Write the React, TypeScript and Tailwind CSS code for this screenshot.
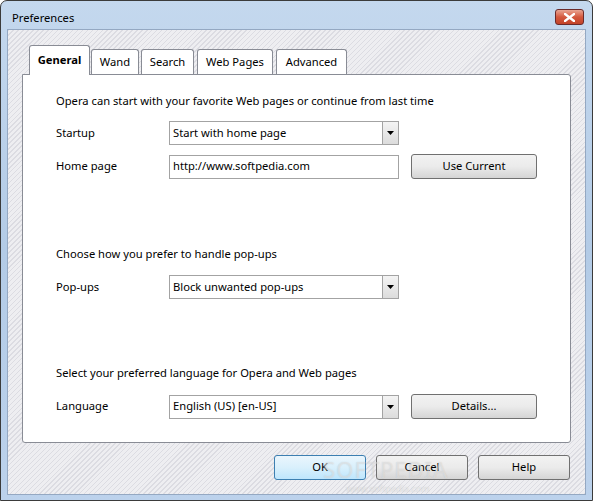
import React from "react";

const hatch =
  "bg-[repeating-linear-gradient(135deg,#dcdce2_0px,#dcdce2_1px,#eeeef1_1px,#eeeef1_3.5px)]";

function Select({ value }: { value: string }) {
  return (
    <div className="flex h-[24px] w-[230px] border border-[#a3a3a3] bg-white">
      <div className="flex flex-1 items-center pl-[3px] text-[11.2px] text-black">{value}</div>
      <div className="flex w-[16px] items-center justify-center border-l border-[#a3a3a3] bg-gradient-to-b from-[#f4f4f4] to-[#dcdcdc]">
        <svg width="7" height="4" viewBox="0 0 7 4">
          <path d="M0 0h7L3.5 4z" fill="#000" />
        </svg>
      </div>
    </div>
  );
}

function Btn({ label, w, def }: { label: string; w: string; def?: boolean }) {
  return (
    <div
      className={
        "flex h-[25px] items-center justify-center rounded-[3px] border text-[11.2px] text-black " +
        w +
        " " +
        (def
          ? "border-[#3c7fb1] bg-gradient-to-b from-[#eaf6fd] via-[#d9f0fc] to-[#bee6fd]"
          : "border-[#707070] bg-gradient-to-b from-[#f2f2f2] via-[#ebebeb] to-[#d5d5d5]")
      }
    >
      {label}
    </div>
  );
}

function Tab({ label, active, cls }: { label: string; active?: boolean; cls: string }) {
  return (
    <div
      className={
        "relative flex items-center justify-center rounded-t-[3px] border border-b-0 border-[#898c95] bg-white text-[11.2px] text-black " +
        cls +
        " " +
        (active ? "z-10 mb-[-1px] h-[30px] font-bold" : "h-[25px]")
      }
    >
      {label}
    </div>
  );
}

function Row({ label, children }: { label: string; children: React.ReactNode }) {
  return (
    <div className="flex items-center">
      <div className="w-[113px] text-[11.2px] text-black">{label}</div>
      {children}
    </div>
  );
}

export default function App() {
  return (
    <div
      className="relative h-[501px] w-[593px] overflow-hidden rounded-t-[7px] border border-[#3b3b3b] bg-gradient-to-b from-[#c4d8ee] via-[#b3cbe6] to-[#bcd2ec]"
      style={{ fontFamily: '"Noto Sans", "DejaVu Sans", sans-serif' }}
    >
      <div className="flex h-[28px] items-center justify-between pl-[11px] pr-[8px]">
        <div className="pt-[6px] text-[11.2px] text-black">Preferences</div>
        <div className="mt-[4px] flex h-[16px] w-[29px] items-center justify-center rounded-[3px] border border-[#6b2a2a] bg-gradient-to-b from-[#e8a493] via-[#d4583e] to-[#c24329]">
          <svg width="11" height="9" viewBox="0 0 11 9">
            <path d="M1 1l9 7M10 1l-9 7" stroke="#fff" strokeWidth="2.4" strokeLinecap="square" />
          </svg>
        </div>
      </div>
      <div
        className={
          "mx-[6px] flex h-[466px] flex-col border border-[#94a8c2] px-[14px] pt-[15px] " + hatch
        }
      >
        <div className="flex items-end pl-[7px]">
          <Tab label="General" active cls="w-[61px]" />
          <Tab label="Wand" cls="ml-[1px] w-[48px]" />
          <Tab label="Search" cls="ml-[2px] w-[53px]" />
          <Tab label="Web Pages" cls="ml-[3px] w-[76px]" />
          <Tab label="Advanced" cls="ml-[3px] w-[71px]" />
        </div>
        <div className="flex h-[369px] flex-col rounded-[3px] rounded-tl-none border border-[#898c95] bg-white pl-[33px] pt-[18px]">
          <div className="text-[11.2px] leading-[16px] text-black">
            Opera can start with your favorite Web pages or continue from last time
          </div>
          <div className="mt-[12px] flex flex-col gap-[9px]">
            <Row label="Startup">
              <Select value="Start with home page" />
            </Row>
            <Row label="Home page">
              <div className="flex h-[24px] w-[230px] items-center border border-[#a3a3a3] pl-[3px] text-[11.2px]">
                http://www.softpedia.com
              </div>
              <div className="ml-[12px]">
                <Btn label="Use Current" w="w-[126px]" />
              </div>
            </Row>
          </div>
          <div className="mt-[67px] text-[11.2px] leading-[16px] text-black">
            Choose how you prefer to handle pop-ups
          </div>
          <div className="mt-[13px]">
            <Row label="Pop-ups">
              <Select value="Block unwanted pop-ups" />
            </Row>
          </div>
          <div className="mt-[66px] text-[11.2px] leading-[16px] text-black">
            Select your preferred language for Opera and Web pages
          </div>
          <div className="mt-[13px]">
            <Row label="Language">
              <Select value="English (US) [en-US]" />
              <div className="ml-[12px]">
                <Btn label="Details..." w="w-[126px]" />
              </div>
            </Row>
          </div>
        </div>
        <div className="mt-[12px] flex justify-end gap-[10px] pr-px">
          <Btn label="OK" w="w-[92px]" def />
          <Btn label="Cancel" w="w-[92px]" />
          <Btn label="Help" w="w-[92px]" />
        </div>
      </div>
      <div className="pointer-events-none absolute left-[322px] top-[452px] text-[22px] tracking-[1px] text-white/40 [text-shadow:0_0_1px_rgba(120,120,120,0.3)]">
        SOFTPEDIA
      </div>
      <div className="pointer-events-none absolute left-[345px] top-[481px] text-[9px] text-white/50 [text-shadow:0_0_1px_rgba(120,120,120,0.35)]">
        www.softpedia.com
      </div>
    </div>
  );
}
